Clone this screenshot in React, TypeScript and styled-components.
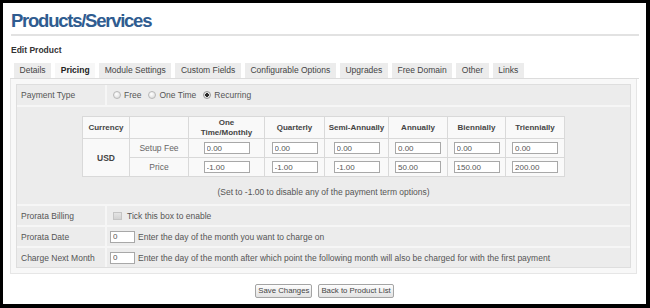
import React, { useState } from 'react'
import styled, { createGlobalStyle } from 'styled-components'

const GlobalStyle = createGlobalStyle`
  html, body {
    margin: 0;
    padding: 0;
    background: #000;
  }
  body {
    font-family: 'Liberation Sans', Arial, sans-serif;
    font-size: 8.5px;
    color: #555;
  }
`

const TABS = [
  'Details',
  'Pricing',
  'Module Settings',
  'Custom Fields',
  'Configurable Options',
  'Upgrades',
  'Free Domain',
  'Other',
  'Links',
]

const CYCLES = [
  { label: ['One', 'Time/Monthly'], setup: '0.00', price: '-1.00' },
  { label: ['Quarterly'], setup: '0.00', price: '-1.00' },
  { label: ['Semi-Annually'], setup: '0.00', price: '-1.00' },
  { label: ['Annually'], setup: '0.00', price: '50.00' },
  { label: ['Biennially'], setup: '0.00', price: '150.00' },
  { label: ['Triennially'], setup: '0.00', price: '200.00' },
]

const COL_WIDTHS = [47, 59, 76, 60, 64, 59, 58, 59]

const App: React.FC = () => {
  const [activeTab, setActiveTab] = useState('Pricing')
  const [paymentType, setPaymentType] = useState('recurring')

  return (
    <>
      <GlobalStyle />
      <Frame>
        <Title>Products/Services</Title>
        <Rule />
        <SubTitle>Edit Product</SubTitle>
        <TabBar>
          {TABS.map((tab) => (
            <Tab key={tab} $active={tab === activeTab} onClick={() => setActiveTab(tab)}>
              {tab}
            </Tab>
          ))}
        </TabBar>
        <Panel>
          <FormBox>
            <FormRow $height={20}>
              <FieldLabel>Payment Type</FieldLabel>
              <FieldArea>
                <RadioLabel>
                  <Radio name='paytype' checked={paymentType === 'free'} onChange={() => setPaymentType('free')} />
                  Free
                </RadioLabel>
                <RadioLabel>
                  <Radio name='paytype' checked={paymentType === 'onetime'} onChange={() => setPaymentType('onetime')} />
                  One Time
                </RadioLabel>
                <RadioLabel>
                  <Radio name='paytype' checked={paymentType === 'recurring'} onChange={() => setPaymentType('recurring')} />
                  Recurring
                </RadioLabel>
              </FieldArea>
            </FormRow>
            <WideRow>
              <PriceTable>
                <colgroup>
                  {COL_WIDTHS.map((w, i) => (
                    <col key={i} style={{ width: w }} />
                  ))}
                </colgroup>
                <thead>
                  <tr>
                    <HeadCell>Currency</HeadCell>
                    <HeadCell />
                    {CYCLES.map((c) => (
                      <HeadCell key={c.label.join(' ')}>
                        {c.label.map((line, i) => (
                          <React.Fragment key={line}>
                            {i > 0 && <br />}
                            {line}
                          </React.Fragment>
                        ))}
                      </HeadCell>
                    ))}
                  </tr>
                </thead>
                <tbody>
                  <tr>
                    <CurrencyCell rowSpan={2}>USD</CurrencyCell>
                    <TypeCell>Setup Fee</TypeCell>
                    {CYCLES.map((c) => (
                      <PriceCell key={c.label.join(' ')}>
                        <PriceInput defaultValue={c.setup} />
                      </PriceCell>
                    ))}
                  </tr>
                  <tr>
                    <TypeCell>Price</TypeCell>
                    {CYCLES.map((c) => (
                      <PriceCell key={c.label.join(' ')}>
                        <PriceInput defaultValue={c.price} />
                      </PriceCell>
                    ))}
                  </tr>
                </tbody>
              </PriceTable>
              <Note>(Set to -1.00 to disable any of the payment term options)</Note>
            </WideRow>
            <FormRow $height={19}>
              <FieldLabel>Prorata Billing</FieldLabel>
              <FieldArea>
                <RadioLabel>
                  <Checkbox />
                  Tick this box to enable
                </RadioLabel>
              </FieldArea>
            </FormRow>
            <FormRow $height={19}>
              <FieldLabel>Prorata Date</FieldLabel>
              <FieldArea>
                <DayInput defaultValue='0' />
                Enter the day of the month you want to charge on
              </FieldArea>
            </FormRow>
            <FormRow $height={19}>
              <FieldLabel>Charge Next Month</FieldLabel>
              <FieldArea>
                <DayInput defaultValue='0' />
                Enter the day of the month after which point the following month will also be charged for with the first payment
              </FieldArea>
            </FormRow>
          </FormBox>
        </Panel>
        <ButtonRow>
          <Button>Save Changes</Button>
          <Button>Back to Product List</Button>
        </ButtonRow>
      </Frame>
    </>
  )
}

export default App

const Frame = styled.div`
  box-sizing: border-box;
  width: 650px;
  height: 308px;
  border-style: solid;
  border-color: #000;
  border-width: 3px 4px 4px 3px;
  background: #fff;
  padding: 0 7px 0 7px;
  overflow: hidden;
`

const Title = styled.h1`
  margin: 8px 0 0 1px;
  font-size: 18.5px;
  line-height: 20px;
  font-weight: bold;
  letter-spacing: -1.25px;
  color: #2f5c90;
`

const Rule = styled.div`
  margin: 3px 0 0 1px;
  height: 2px;
  background: #e2e2e2;
`

const SubTitle = styled.div`
  margin: 9px 0 0 1px;
  font-size: 8.5px;
  line-height: 10px;
  font-weight: bold;
  color: #333;
`

const TabBar = styled.div`
  display: flex;
  gap: 4px;
  margin-top: 8px;
  padding-left: 4px;
  border-bottom: 1px solid #dcdcdc;
`

const Tab = styled.div<{ $active?: boolean }>`
  height: 15px;
  line-height: 15px;
  padding: 0 5.6px;
  background: ${(p) => (p.$active ? '#f7f7f7' : '#ececec')};
  color: ${(p) => (p.$active ? '#222' : '#444')};
  font-weight: ${(p) => (p.$active ? 'bold' : 'normal')};
  white-space: nowrap;
  cursor: pointer;
`

const Panel = styled.div`
  margin: 0 2px 0 0;
  padding: 5px;
  background: #f8f8f8;
  border: 1px solid #e6e6e6;
  border-top: none;
`

const FormBox = styled.div`
  display: flex;
  flex-direction: column;
  gap: 2px;
  background: #f6f6f6;
  border: 1px solid #dedede;
`

const FormRow = styled.div<{ $height: number }>`
  display: grid;
  grid-template-columns: 88px 1fr;
  gap: 2px;
  height: ${(p) => p.$height}px;
`

const FieldLabel = styled.div`
  display: flex;
  align-items: center;
  padding-left: 4px;
  background: #ececec;
  color: #555;
`

const FieldArea = styled.div`
  display: flex;
  align-items: center;
  gap: 3px;
  padding-left: 3px;
  background: #ececec;
  color: #555;
  white-space: nowrap;
  overflow: hidden;
`

const WideRow = styled.div`
  box-sizing: border-box;
  height: 97px;
  display: flex;
  flex-direction: column;
  align-items: center;
  padding-top: 9px;
  background: #ececec;
`

const RadioLabel = styled.label`
  display: inline-flex;
  align-items: center;
  gap: 3px;
  margin: 0 4px 0 3px;
  color: #555;
  & + & {
    margin-left: 0;
  }
`

const Radio = styled.input.attrs({ type: 'radio' })`
  appearance: none;
  margin: 0;
  width: 8px;
  height: 8px;
  border-radius: 50%;
  border: 1px solid #b8b8b8;
  background: radial-gradient(circle at 40% 35%, #fff, #d6d6d6);
  box-sizing: border-box;
  &:checked {
    background: radial-gradient(circle, #2a2a2a 0 1.6px, #e8e8e8 2px, #cfcfcf);
    border-color: #999;
  }
`

const Checkbox = styled.input.attrs({ type: 'checkbox' })`
  appearance: none;
  margin: 0 2px 0 0;
  width: 9px;
  height: 8px;
  border: 1px solid #c4c4c4;
  background: linear-gradient(#e4e4e4, #d2d2d2);
  box-sizing: border-box;
`

const PriceTable = styled.table`
  table-layout: fixed;
  border-collapse: collapse;
  width: 482px;
  background: #f9f9f9;
`

const HeadCell = styled.th`
  height: 21px;
  padding: 0 1px;
  border: 1px solid #d9d9d9;
  font-size: 8px;
  line-height: 10px;
  font-weight: bold;
  color: #444;
  text-align: center;
  white-space: nowrap;
`

const CurrencyCell = styled.td`
  border: 1px solid #d9d9d9;
  font-weight: bold;
  color: #444;
  text-align: center;
`

const TypeCell = styled.td`
  height: 16px;
  border: 1px solid #d9d9d9;
  color: #666;
  text-align: center;
`

const PriceCell = styled.td`
  padding: 0;
  border: 1px solid #d9d9d9;
  text-align: center;
  line-height: 0;
`

const PriceInput = styled.input`
  box-sizing: border-box;
  width: 46px;
  height: 12px;
  margin: 0;
  padding: 0 2px;
  border: 1px solid #a8a8a8;
  background: #fff;
  font-family: 'Liberation Sans', Arial, sans-serif;
  font-size: 8px;
  color: #555;
  vertical-align: middle;
`

const DayInput = styled(PriceInput)`
  width: 25px;
`

const Note = styled.div`
  margin-top: 10px;
  line-height: 10px;
  color: #555;
`

const ButtonRow = styled.div`
  display: flex;
  justify-content: center;
  gap: 6px;
  margin-top: 10px;
`

const Button = styled.button`
  height: 14px;
  padding: 0 2px;
  border: 1px solid #a4a4a4;
  border-radius: 2px;
  background: linear-gradient(#fdfdfd, #e2e2e2);
  font-family: 'Liberation Sans', Arial, sans-serif;
  font-size: 7.8px;
  line-height: 12px;
  color: #444;
`
